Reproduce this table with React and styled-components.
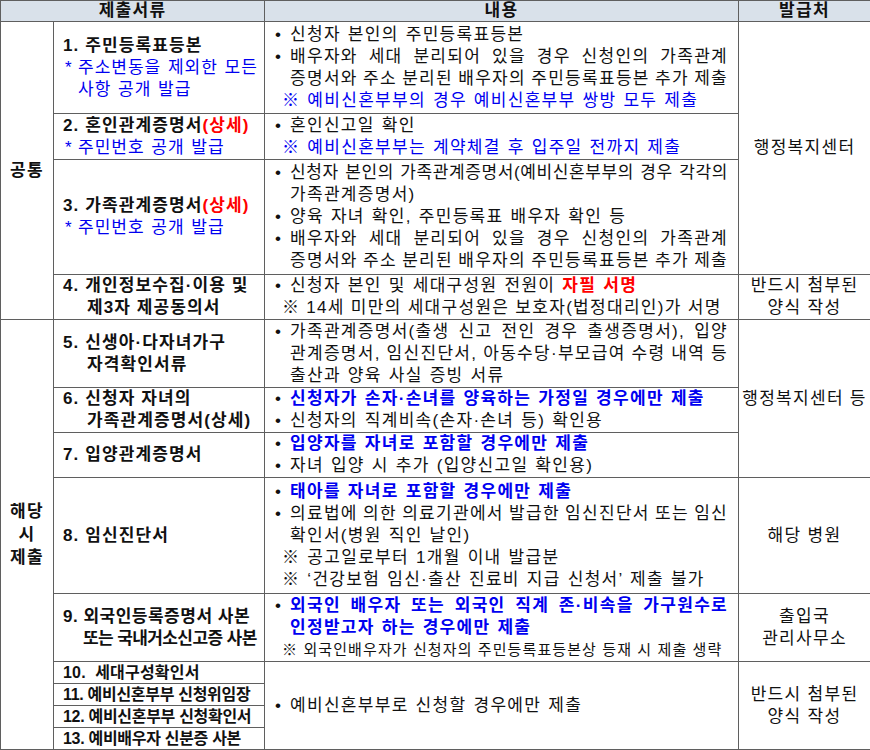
import React from 'react'
import styled, { createGlobalStyle } from 'styled-components'

const GlobalStyle = createGlobalStyle`
  html, body { margin: 0; padding: 0; background: #fff; }
  body {
    font-family: "Liberation Sans", "Noto Sans CJK KR", sans-serif;
    color: #111;
  }
`

const Table = styled.table`
  width: 870px;
  border-collapse: collapse;
  table-layout: fixed;
  font-size: 17px;
  line-height: 22px;
  letter-spacing: 1.3px;
`

const Row = styled.tr`
  height: ${p => p.$h}px;
`

const Head = styled.th`
  background: #d9e1ea;
  border: 1px solid #5f5f5f;
  padding: 0;
  font-weight: 700;
  text-align: center;
  line-height: 20px;
`

const Group = styled.td`
  border: 1px solid #5f5f5f;
  padding: 0;
  text-align: center;
  vertical-align: middle;
  font-weight: 700;
  line-height: 23px;
`

const Doc = styled.td`
  border: 1px solid #5f5f5f;
  padding: 0 0 0 9px;
  vertical-align: middle;
  font-weight: 700;
  font-size: ${p => (p.$tight ? '16px' : '17px')};
  letter-spacing: ${p => (p.$tight ? '-0.3px' : '1.1px')};
  line-height: ${p => (p.$tight ? '20px' : '22px')};
`

const DocLine = styled.div`
  padding-left: ${p => p.$indent || 0}px;
  white-space: nowrap;
  letter-spacing: ${p => (p.$ls !== undefined ? `${p.$ls}px` : 'inherit')};
`

const Red = styled.span`
  color: #f00;
`

const DocNote = styled.div`
  display: flex;
  color: #0000f0;
  font-weight: 400;
  white-space: nowrap;
  letter-spacing: 1px;
  word-spacing: 1px;
`

const Star = styled.span`
  flex: none;
  width: 15px;
  padding-left: 2px;
  box-sizing: border-box;
`

const Content = styled.td`
  border: 1px solid #5f5f5f;
  padding: 0 10px 0 8px;
  vertical-align: middle;
`

const Item = styled.div`
  display: flex;
  color: ${p => (p.$blue ? '#0000f0' : 'inherit')};
  font-weight: ${p => (p.$blue ? 700 : 400)};
`

const Mark = styled.span`
  flex: none;
  width: 17px;
  padding-left: 2px;
  box-sizing: border-box;
  color: #111;
  font-weight: 400;
`

const Body = styled.div`
  flex: 1;
  min-width: 0;
`

const Line = styled.div`
  white-space: nowrap;
  text-align: ${p => (p.$j ? 'justify' : 'left')};
  text-align-last: ${p => (p.$j ? 'justify' : 'auto')};
  word-spacing: ${p => (p.$j ? '-2px' : '1px')};
  letter-spacing: ${p => (p.$ls !== undefined ? `${p.$ls}px` : 'inherit')};
`

const Note = styled.div`
  margin-left: 9px;
  color: ${p => (p.$blue ? '#0000f0' : 'inherit')};
  font-size: ${p => (p.$small ? '15px' : '17px')};
  letter-spacing: ${p => (p.$small ? '1.1px' : '1.3px')};
  word-spacing: ${p => (p.$ws !== undefined ? p.$ws : 1)}px;
  white-space: nowrap;
`

const Issuer = styled.td`
  border: 1px solid #5f5f5f;
  padding: 0;
  text-align: center;
  vertical-align: middle;
  line-height: 22px;
`

export default function App() {
  return (
    <>
      <GlobalStyle />
      <Table>
        <colgroup>
          <col style={{ width: 53 }} />
          <col style={{ width: 211 }} />
          <col style={{ width: 474 }} />
          <col style={{ width: 132 }} />
        </colgroup>
        <tbody>
          <Row $h={21}>
            <Head colSpan={2}>제출서류</Head>
            <Head>내용</Head>
            <Head>발급처</Head>
          </Row>

          <Row $h={92}>
            <Group rowSpan={4}>공통</Group>
            <Doc>
              <DocLine>1. 주민등록표등본</DocLine>
              <DocNote>
                <Star>*</Star>
                <span>주소변동을 제외한 모든<br />사항 공개 발급</span>
              </DocNote>
            </Doc>
            <Content>
              <Item>
                <Mark>•</Mark>
                <Body><Line>신청자 본인의 주민등록표등본</Line></Body>
              </Item>
              <Item>
                <Mark>•</Mark>
                <Body>
                  <Line $j>배우자와 세대 분리되어 있을 경우 신청인의 가족관계</Line>
                  <Line $j>증명서와 주소 분리된 배우자의 주민등록표등본 추가 제출</Line>
                </Body>
              </Item>
              <Note $blue>※ 예비신혼부부의 경우 예비신혼부부 쌍방 모두 제출</Note>
            </Content>
            <Issuer rowSpan={3}>행정복지센터</Issuer>
          </Row>

          <Row $h={46}>
            <Doc>
              <DocLine>2. 혼인관계증명서<Red>(상세)</Red></DocLine>
              <DocNote>
                <Star>*</Star>
                <span>주민번호 공개 발급</span>
              </DocNote>
            </Doc>
            <Content>
              <Item>
                <Mark>•</Mark>
                <Body><Line>혼인신고일 확인</Line></Body>
              </Item>
              <Note $blue>※ 예비신혼부부는 계약체결 후 입주일 전까지 제출</Note>
            </Content>
          </Row>

          <Row $h={115}>
            <Doc>
              <DocLine>3. 가족관계증명서<Red>(상세)</Red></DocLine>
              <DocNote>
                <Star>*</Star>
                <span>주민번호 공개 발급</span>
              </DocNote>
            </Doc>
            <Content>
              <Item>
                <Mark>•</Mark>
                <Body>
                  <Line $j $ls={0.6}>신청자 본인의 가족관계증명서(예비신혼부부의 경우 각각의</Line>
                  <Line>가족관계증명서)</Line>
                </Body>
              </Item>
              <Item>
                <Mark>•</Mark>
                <Body><Line>양육 자녀 확인, 주민등록표 배우자 확인 등</Line></Body>
              </Item>
              <Item>
                <Mark>•</Mark>
                <Body>
                  <Line $j>배우자와 세대 분리되어 있을 경우 신청인의 가족관계</Line>
                  <Line $j>증명서와 주소 분리된 배우자의 주민등록표등본 추가 제출</Line>
                </Body>
              </Item>
            </Content>
          </Row>

          <Row $h={45}>
            <Doc>
              <DocLine>4. 개인정보수집·이용 및</DocLine>
              <DocLine $indent={24}>제3자 제공동의서</DocLine>
            </Doc>
            <Content>
              <Item>
                <Mark>•</Mark>
                <Body>
                  <Line>신청자 본인 및 세대구성원 전원이 <Red as="b">자필 서명</Red></Line>
                </Body>
              </Item>
              <Note $ws={0}>※ 14세 미만의 세대구성원은 보호자(법정대리인)가 서명</Note>
            </Content>
            <Issuer>반드시 첨부된<br />양식 작성</Issuer>
          </Row>

          <Row $h={68}>
            <Group rowSpan={9}>해당<br />시<br />제출</Group>
            <Doc>
              <DocLine>5. 신생아·다자녀가구</DocLine>
              <DocLine $indent={24}>자격확인서류</DocLine>
            </Doc>
            <Content>
              <Item>
                <Mark>•</Mark>
                <Body>
                  <Line $j>가족관계증명서(출생 신고 전인 경우 출생증명서), 입양</Line>
                  <Line $j>관계증명서, 임신진단서, 아동수당·부모급여 수령 내역 등</Line>
                  <Line>출산과 양육 사실 증빙 서류</Line>
                </Body>
              </Item>
            </Content>
            <Issuer rowSpan={3}>행정복지센터 등</Issuer>
          </Row>

          <Row $h={45}>
            <Doc>
              <DocLine>6. 신청자 자녀의</DocLine>
              <DocLine $indent={24}>가족관계증명서(상세)</DocLine>
            </Doc>
            <Content>
              <Item $blue>
                <Mark>•</Mark>
                <Body><Line>신청자가 손자·손녀를 양육하는 가정일 경우에만 제출</Line></Body>
              </Item>
              <Item>
                <Mark>•</Mark>
                <Body><Line>신청자의 직계비속(손자·손녀 등) 확인용</Line></Body>
              </Item>
            </Content>
          </Row>

          <Row $h={45}>
            <Doc>
              <DocLine>7. 입양관계증명서</DocLine>
            </Doc>
            <Content>
              <Item $blue>
                <Mark>•</Mark>
                <Body><Line>입양자를 자녀로 포함할 경우에만 제출</Line></Body>
              </Item>
              <Item>
                <Mark>•</Mark>
                <Body><Line>자녀 입양 시 추가 (입양신고일 확인용)</Line></Body>
              </Item>
            </Content>
          </Row>

          <Row $h={116}>
            <Doc>
              <DocLine>8. 임신진단서</DocLine>
            </Doc>
            <Content>
              <Item $blue>
                <Mark>•</Mark>
                <Body><Line>태아를 자녀로 포함할 경우에만 제출</Line></Body>
              </Item>
              <Item>
                <Mark>•</Mark>
                <Body>
                  <Line $j>의료법에 의한 의료기관에서 발급한 임신진단서 또는 임신</Line>
                  <Line>확인서(병원 직인 날인)</Line>
                </Body>
              </Item>
              <Note>※ 공고일로부터 1개월 이내 발급분</Note>
              <Note>※ ‘건강보험 임신·출산 진료비 지급 신청서’ 제출 불가</Note>
            </Content>
            <Issuer>해당 병원</Issuer>
          </Row>

          <Row $h={68}>
            <Doc>
              <DocLine $ls={0.5}>9. 외국인등록증명서 사본</DocLine>
              <DocLine $indent={20} $ls={-0.6}>또는 국내거소신고증 사본</DocLine>
            </Doc>
            <Content>
              <Item $blue>
                <Mark>•</Mark>
                <Body>
                  <Line $j>외국인 배우자 또는 외국인 직계 존·비속을 가구원수로</Line>
                  <Line>인정받고자 하는 경우에만 제출</Line>
                </Body>
              </Item>
              <Note $small $ws={0}>※ 외국인배우자가 신청자의 주민등록표등본상 등재 시 제출 생략</Note>
            </Content>
            <Issuer>출입국<br />관리사무소</Issuer>
          </Row>

          <Row $h={22}>
            <Doc $tight><DocLine $ls={0.2}>10.&nbsp; 세대구성확인서</DocLine></Doc>
            <Content rowSpan={4}>
              <Item>
                <Mark>•</Mark>
                <Body><Line>예비신혼부부로 신청할 경우에만 제출</Line></Body>
              </Item>
            </Content>
            <Issuer rowSpan={4}>반드시 첨부된<br />양식 작성</Issuer>
          </Row>
          <Row $h={22}>
            <Doc $tight><DocLine>11. 예비신혼부부 신청위임장</DocLine></Doc>
          </Row>
          <Row $h={22}>
            <Doc $tight><DocLine>12. 예비신혼부부 신청확인서</DocLine></Doc>
          </Row>
          <Row $h={22}>
            <Doc $tight><DocLine>13. 예비배우자 신분증 사본</DocLine></Doc>
          </Row>
        </tbody>
      </Table>
    </>
  )
}
